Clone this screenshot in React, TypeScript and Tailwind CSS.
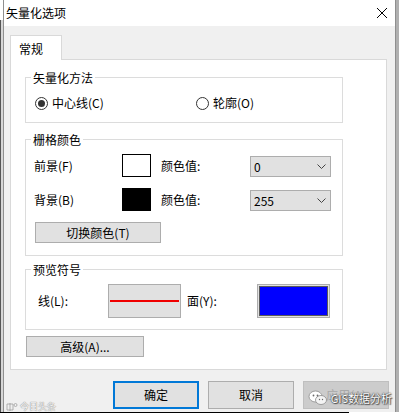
import React from "react";

function Radio({ checked }: { checked: boolean }) {
  return (
    <span className="w-[13px] h-[13px] rounded-full border border-[#333333] bg-white flex items-center justify-center shrink-0">
      {checked && <span className="w-[7px] h-[7px] rounded-full bg-[#333333]" />}
    </span>
  );
}

function Chevron() {
  return (
    <svg width="9" height="5" viewBox="0 0 9 5" className="shrink-0">
      <path d="M0.5 0.5 L4.5 4.5 L8.5 0.5" fill="none" stroke="#444" strokeWidth="1" />
    </svg>
  );
}

function Select({ value }: { value: string }) {
  return (
    <div className="self-end w-[81px] h-[21px] bg-[#e1e1e1] border border-[#adadad] flex items-center justify-between pl-[3px] pr-[4px]">
      <span>{value}</span>
      <Chevron />
    </div>
  );
}

function Group({
  title,
  className,
  children,
}: {
  title: string;
  className: string;
  children: React.ReactNode;
}) {
  return (
    <div className={"relative w-[318px] border border-[#dcdcdc] " + className}>
      <span className="absolute left-[5px] top-[-8px] px-[2px] bg-white leading-[16px]">{title}</span>
      {children}
    </div>
  );
}

export default function App() {
  return (
    <div className="w-[399px] h-[419px] overflow-hidden bg-white flex flex-col text-[12px] leading-[16px] text-black font-['Noto_Sans_CJK_SC',sans-serif]">
      <div className="flex h-[412px]">
        {/* background window strip left */}
        <div className="w-[3px] flex flex-col">
          <div className="h-[20px] bg-white" />
          <div className="flex-1 bg-[#d6d6d6] border-l border-[#555555]" />
        </div>
        {/* dialog */}
        <div className="w-[393px] flex flex-col border-l border-r border-[#8f8f8f]">
          <div className="h-[26px] bg-white flex items-center justify-between pl-[2px] pr-[7px]">
            <span className="text-[12px]">矢量化选项</span>
            <svg width="12" height="12" viewBox="0 0 12 12">
              <path d="M1 1 L11 11 M11 1 L1 11" stroke="#000" strokeWidth="1" fill="none" />
            </svg>
          </div>
          <div className="relative flex-1 bg-[#f0f0f0] pt-[9px] pl-[6px] flex flex-col">
            {/* tab */}
            <div className="relative z-10 -mb-px w-[52px] h-[25px] bg-white border border-b-0 border-[#d9d9d9] flex items-center pl-[8px] pt-[1px]">
              常规
            </div>
            {/* panel */}
            <div className="w-[377px] h-[311px] bg-white border border-[#d9d9d9] pl-[14px] flex flex-col">
              <Group title="矢量化方法" className="mt-[17px] h-[46px]">
                <div className="mt-[17px] pl-[9px] h-[16px] flex items-center">
                  <label className="w-[161px] flex items-center">
                    <Radio checked />
                    <span className="ml-[4px]">中心线(C)</span>
                  </label>
                  <label className="flex items-center">
                    <Radio checked={false} />
                    <span className="ml-[4px]">轮廓(O)</span>
                  </label>
                </div>
              </Group>

              <Group title="栅格颜色" className="mt-[16px] h-[117px] pt-[14px] pl-[8px] flex flex-col">
                <div className="h-[23px] flex items-center">
                  <span className="w-[88px]">前景(F)</span>
                  <span className="w-[29px] h-[23px] bg-white border border-black" />
                  <span className="ml-[10px] w-[89px]">颜色值:</span>
                  <Select value="0" />
                </div>
                <div className="mt-[11px] h-[23px] flex items-center">
                  <span className="w-[88px]">背景(B)</span>
                  <span className="w-[29px] h-[23px] bg-black border border-black" />
                  <span className="ml-[10px] w-[89px]">颜色值:</span>
                  <Select value="255" />
                </div>
                <button className="mt-[11px] ml-[1px] w-[126px] h-[21px] bg-[#e1e1e1] border border-[#adadad] flex items-center justify-center">
                  切换颜色(T)
                </button>
              </Group>

              <Group title="预览符号" className="mt-[13px] h-[61px] pt-[14px] pl-[12px]">
                <div className="h-[34px] flex items-center">
                  <span className="w-[70px]">线(L):</span>
                  <div className="w-[73px] h-[34px] bg-[#e1e1e1] border border-[#adadad]">
                    <svg width="71" height="32" viewBox="0 0 71 32" className="block">
                      <rect x="1" y="15" width="69" height="2" fill="#f00000" />
                    </svg>
                  </div>
                  <span className="ml-[6px] w-[70px]">面(Y):</span>
                  <div className="w-[73px] h-[34px] bg-[#e1e1e1] border border-[#adadad] p-[1px] flex">
                    <div className="flex-1 bg-[#0000ff] border border-[#5a5a5a]" />
                  </div>
                </div>
              </Group>

              <button className="mt-[6px] ml-[1px] w-[118px] h-[21px] bg-[#e1e1e1] border border-[#adadad] flex items-center justify-center">
                高级(A)...
              </button>
            </div>

            {/* bottom buttons */}
            <div className="relative mt-[11px] pr-[6px] flex justify-end gap-[9px]">
              <button className="w-[86px] h-[28px] bg-[#e1e1e1] border-2 border-[#0078d7] flex items-center justify-center">
                确定
              </button>
              <button className="w-[86px] h-[28px] bg-[#e1e1e1] border border-[#adadad] flex items-center justify-center">
                取消
              </button>
              <button className="w-[86px] h-[28px] bg-[#cccccc] border border-[#bfbfbf] flex items-center justify-center text-[#a8a8a8]">
                应用(A)
              </button>
              {/* watermark */}
              <div className="absolute right-[3px] top-[9px] flex items-center gap-[3px]">
                <svg width="20" height="16" viewBox="0 0 20 16">
                  <ellipse cx="7.5" cy="6.5" rx="6.5" ry="5.5" fill="#ffffff" stroke="#8a8a8a" strokeWidth="0.8" />
                  <ellipse cx="13" cy="10" rx="5.5" ry="4.5" fill="#f4f4f4" stroke="#8a8a8a" strokeWidth="0.8" />
                  <circle cx="5.5" cy="5.5" r="0.9" fill="#6a6a6a" />
                  <circle cx="9.5" cy="5.5" r="0.9" fill="#6a6a6a" />
                  <circle cx="11.5" cy="9.5" r="0.7" fill="#6a6a6a" />
                  <circle cx="14.5" cy="9.5" r="0.7" fill="#6a6a6a" />
                </svg>
                <span className="text-[11px] leading-[13px] text-white [text-shadow:0_0_1px_#333,0_0_2px_#444,1px_1px_1px_#555]">GIS数据分析</span>
              </div>
            </div>
            {/* bottom-left watermark */}
            <div className="absolute left-[2px] bottom-[0px] flex items-center gap-[2px] text-[9px] leading-[11px] text-[#f4f4f4] [text-shadow:0_0_1px_#888,0_0_1px_#999]">
              <svg width="12" height="10" viewBox="0 0 12 10">
                <path d="M1 2 H7 V8 H1 Z M4 1 V9" fill="none" stroke="#a0a0a0" strokeWidth="0.8" />
                <circle cx="9.5" cy="3" r="1.5" fill="none" stroke="#a0a0a0" strokeWidth="0.8" />
              </svg>
              <span>今日头条</span>
            </div>
          </div>
        </div>
        <div className="w-[3px] bg-[#b0b0b0]" />
      </div>
      <div className="h-[7px] w-[349px] bg-white border-t border-black" />
    </div>
  );
}
